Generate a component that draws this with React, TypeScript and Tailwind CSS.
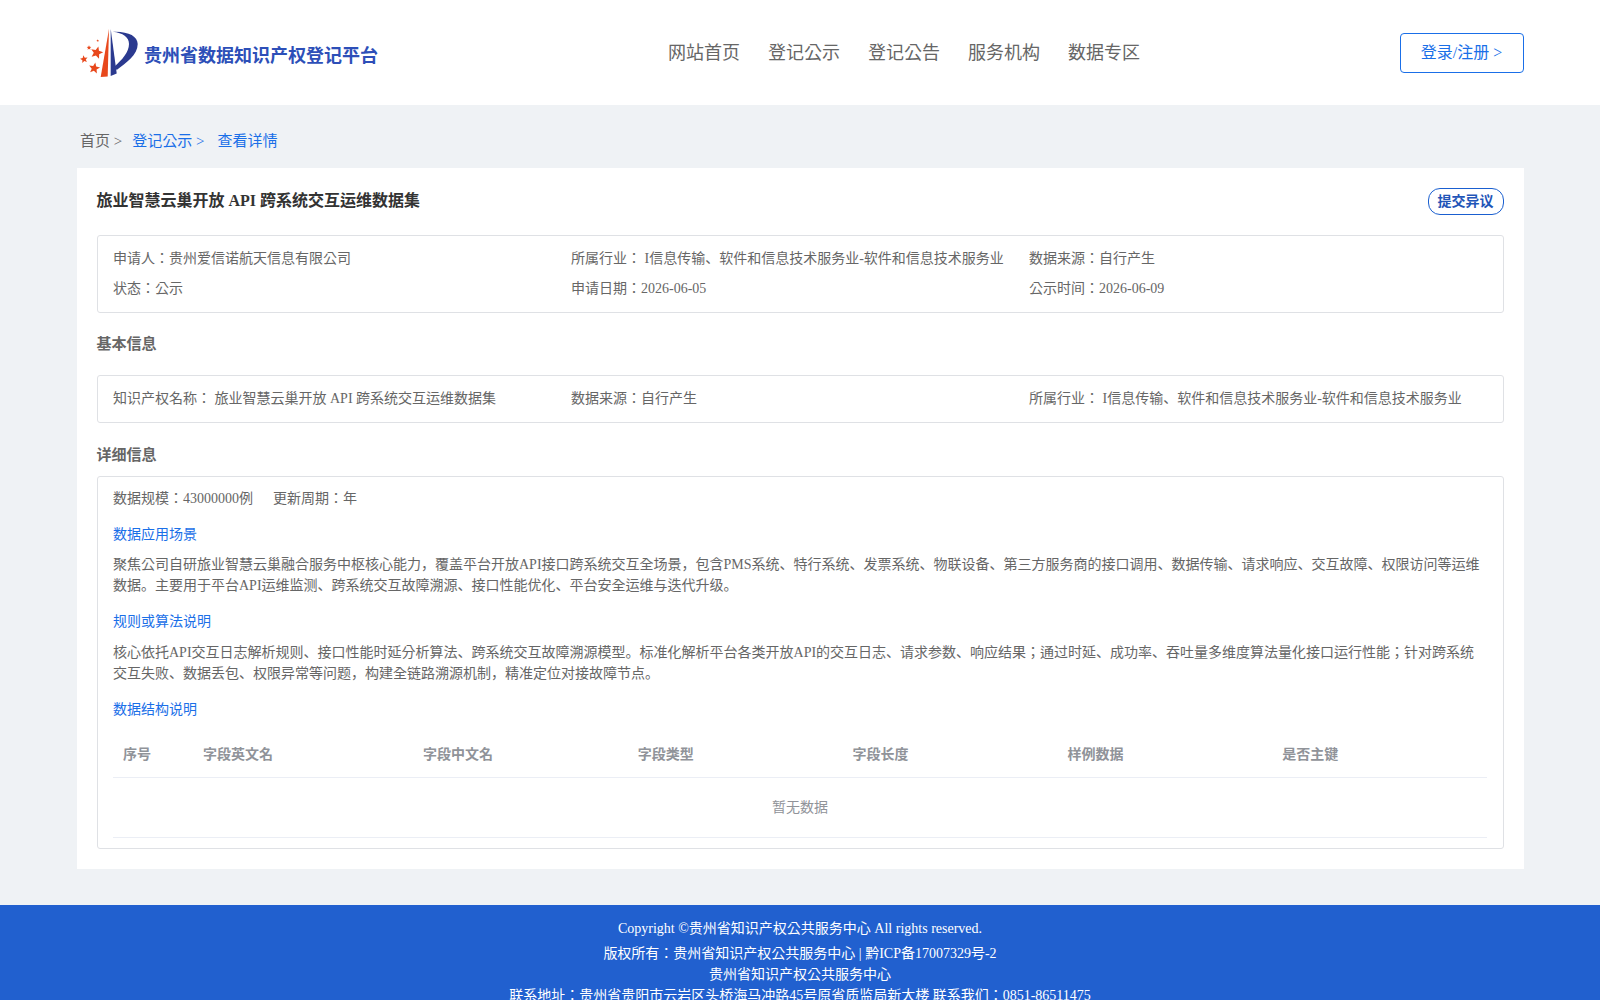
const navItems = ["网站首页", "登记公示", "登记公告", "服务机构", "数据专区"];
const columns = ["序号", "字段英文名", "字段中文名", "字段类型", "字段长度", "样例数据", "是否主键"];

function Star({ cx, cy, r, rot = 0 }: { cx: number; cy: number; r: number; rot?: number }) {
  const pts = Array.from({ length: 10 }, (_, i) => {
    const a = ((i * 36 - 90 + rot) * Math.PI) / 180;
    const d = i % 2 === 0 ? r : r * 0.45;
    return `${(cx + d * Math.cos(a)).toFixed(2)},${(cy + d * Math.sin(a)).toFixed(2)}`;
  }).join(" ");
  return <polygon points={pts} fill="#e8481c" />;
}

function Logo() {
  return (
    <svg width="60" height="52" viewBox="0 0 60 52" className="shrink-0 -mt-[2px]">
      <polygon points="29,2 20.7,50 27.7,49.5" fill="#e8481c" />
      <polygon points="30.7,2 30.7,49 36.7,46.5" fill="#2b3a8f" />
      <path d="M32.7,4.7 C48,4 57.7,9 57.7,17 C57.7,28 46,36 36.7,43 L34.5,39.5 C42,33 49,25 49,17 C49,10 43,6 32.7,4.7 Z" fill="#2b3a8f" />
      <Star cx={16.7} cy={25.7} r={6.5} rot={15} />
      <Star cx={4} cy={32.3} r={4} rot={-10} />
      <Star cx={14.3} cy={41.3} r={5.8} rot={10} />
      <Star cx={9} cy={20.7} r={2.4} />
      <Star cx={17.7} cy={13.7} r={1.4} />
    </svg>
  );
}

function Header() {
  return (
    <header className="h-[105px] bg-white px-[80px] flex items-center justify-between">
      <div className="flex items-center gap-[4px] w-[328px] pt-[2px]">
        <Logo />
        <span className="pt-[6px] text-[18px] font-bold text-[#2d4fb8] font-['Liberation_Sans','Noto_Sans_CJK_KR',sans-serif] whitespace-nowrap">
          贵州省数据知识产权登记平台
        </span>
      </div>
      <nav className="flex gap-[28px] text-[18px] text-[#666] leading-[28px]">
        {navItems.map((n) => (
          <span key={n}>{n}</span>
        ))}
      </nav>
      <button className="w-[124px] h-[40px] -mr-[4px] pt-[1px] pr-[1px] border border-[#1a6fe8] rounded-[4px] text-[16px] text-[#1a6fe8]">
        登录/注册 &gt;
      </button>
    </header>
  );
}

function InfoBox({ rows }: { rows: string[][] }) {
  return (
    <div className="border border-[#dfe1e5] rounded-[3px] px-[15.5px] py-[8px]">
      {rows.map((row, i) => (
        <div key={i} className="grid grid-cols-3 leading-[30px]">
          {row.map((c) => (
            <div key={c} className="whitespace-nowrap">{c}</div>
          ))}
        </div>
      ))}
    </div>
  );
}

function BlueLabel({ children }: { children: string }) {
  return <div className="text-[#1a6fe8] leading-[20px]">{children}</div>;
}

export default function App() {
  return (
    <div className="min-h-screen bg-[#eff2f5] text-[14px] text-[#666] font-['Liberation_Serif','Noto_Sans_CJK_KR',serif]">
      <Header />

      {/* Breadcrumb */}
      <div className="h-[63px] pl-[80px] flex items-center text-[15px] pt-[10px]">
        <span className="mr-[10px]">首页 &gt;</span>
        <span className="text-[#1a6fe8] mr-[13px]">登记公示 &gt;</span>
        <span className="text-[#1a6fe8]">查看详情</span>
      </div>

      <main className="mx-[76.5px] bg-white px-[20px] pt-[20px] pb-[20px]">
        <div className="flex items-start justify-between h-[47px]">
          <h1 className="pt-[1px] text-[16px] font-bold text-[#333] leading-[24px]">
            旅业智慧云巢开放 API 跨系统交互运维数据集
          </h1>
          <button className="h-[27px] px-[9px] border border-[#1a5fd0] rounded-[12px] text-[14px] font-bold text-[#1f55b8] leading-[24px]">
            提交异议
          </button>
        </div>

        <InfoBox
          rows={[
            ["申请人：贵州爱信诺航天信息有限公司", "所属行业： I信息传输、软件和信息技术服务业-软件和信息技术服务业", "数据来源：自行产生"],
            ["状态：公示", "申请日期：2026-06-05", "公示时间：2026-06-09"],
          ]}
        />

        <h2 className="mt-[21px] mb-[20px] text-[15px] font-bold leading-[21px]">基本信息</h2>

        <InfoBox
          rows={[["知识产权名称： 旅业智慧云巢开放 API 跨系统交互运维数据集", "数据来源：自行产生", "所属行业： I信息传输、软件和信息技术服务业-软件和信息技术服务业"]]}
        />

        <h2 className="mt-[22px] mb-[10px] text-[15px] font-bold leading-[21px]">详细信息</h2>

        <div className="border border-[#dfe1e5] rounded-[3px] px-[15.5px] pt-[11px] pb-[10px]">
          <div className="flex gap-[20px] leading-[22px]">
            <span>数据规模：43000000例</span>
            <span>更新周期：年</span>
          </div>

          <div className="mt-[15px]"><BlueLabel>数据应用场景</BlueLabel></div>
          <p className="mt-[9px] leading-[21px]">
            聚焦公司自研旅业智慧云巢融合服务中枢核心能力，覆盖平台开放API接口跨系统交互全场景，包含PMS系统、特行系统、发票系统、物联设备、第三方服务商的接口调用、数据传输、请求响应、交互故障、权限访问等运维数据。主要用于平台API运维监测、跨系统交互故障溯源、接口性能优化、平台安全运维与迭代升级。
          </p>

          <div className="mt-[16px]"><BlueLabel>规则或算法说明</BlueLabel></div>
          <p className="mt-[10px] leading-[21px]">
            核心依托API交互日志解析规则、接口性能时延分析算法、跨系统交互故障溯源模型。标准化解析平台各类开放API的交互日志、请求参数、响应结果；通过时延、成功率、吞吐量多维度算法量化接口运行性能；针对跨系统交互失败、数据丢包、权限异常等问题，构建全链路溯源机制，精准定位对接故障节点。
          </p>

          <div className="mt-[16px]"><BlueLabel>数据结构说明</BlueLabel></div>

          <div className="mt-[11px]">
            <div className="grid grid-cols-[80px_220px_repeat(5,1fr)] h-[47px] items-center border-b border-[#ebeef5] font-bold text-[#909399]">
              {columns.map((c) => (
                <div key={c} className="px-[10px]">{c}</div>
              ))}
            </div>
            <div className="h-[60px] flex items-center justify-center border-b border-[#ebeef5] text-[#909399]">
              暂无数据
            </div>
          </div>
        </div>
      </main>

      <footer className="mt-[36px] bg-[#2160cf] text-white text-center pt-[13px] leading-[21px]">
        <div className="mb-[4px]">Copyright ©贵州省知识产权公共服务中心 All rights reserved.</div>
        <div>版权所有：贵州省知识产权公共服务中心 | 黔ICP备17007329号-2</div>
        <div>贵州省知识产权公共服务中心</div>
        <div>联系地址：贵州省贵阳市云岩区头桥海马冲路45号原省质监局新大楼 联系我们：0851-86511475</div>
      </footer>
    </div>
  );
}
